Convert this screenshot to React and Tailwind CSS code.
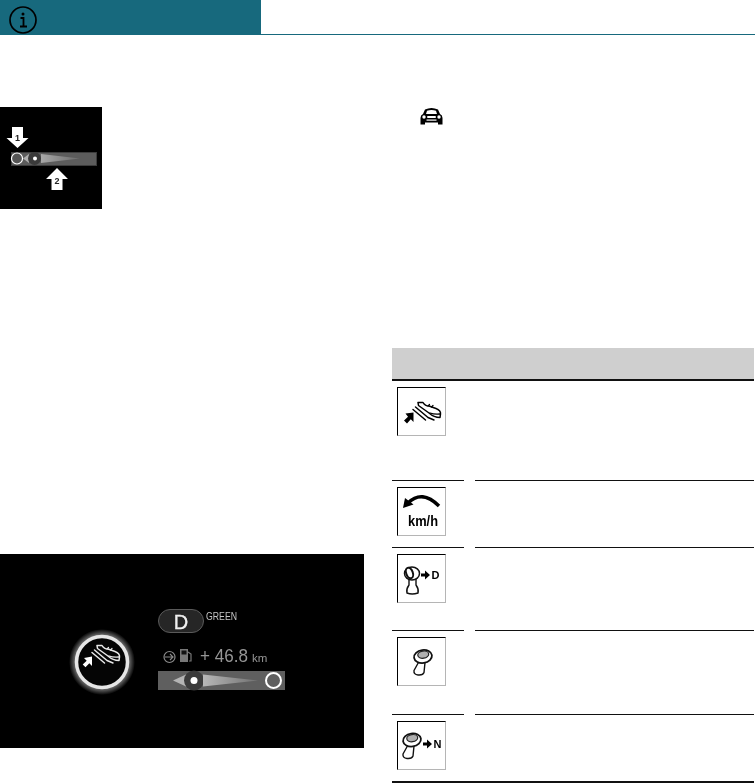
import React from "react"

// shoe on a pedal, drawn from the heel at 4,0 to the toe at 27,15
function Shoe({ color = "#000" }) {
  return (
    <g fill="none" stroke={color} strokeLinejoin="round" strokeLinecap="round">
      <path d="M5 0.500 L10 0.500 Q12 4 16 4 L23 6.500 Q28 8.500 27.500 12 L27 15.500 Q21 15.500 16 11 L5.500 3.500 Z" strokeWidth="1.500" />
      <path d="M17 11 Q21 12.500 27 12" strokeWidth="1.300" />
      <path d="M15 4 L16.500 2.500 M18.500 5 L20 3.500" strokeWidth="1.200" />
      <path d="M2.500 5 L15 15.500 L21 18" strokeWidth="1.500" />
      <path d="M0 7.500 L12.500 18" strokeWidth="1.500" />
    </g>
  )
}

function IconBox({ children }) {
  return (
    <div className="w-[49px] h-[49px] border-t border-l border-t-black border-l-black border-r border-b border-r-[#b5b5b5] border-b-[#b5b5b5] bg-white">
      <svg viewBox="0 0 47 47" width="47" height="47" className="block blur-[0.3px]">
        {children}
      </svg>
    </div>
  )
}

// selector lever, tilted, origin at the centre of its head
function Lever({ x, y }) {
  return (
    <g transform={`translate(${x} ${y})`} fill="none" stroke="#111" strokeLinejoin="round">
      <path d="M-4 5 L-9 14 Q-9.500 18 -5 18.500 Q0 19 1 16 L2 6" fill="#fff" strokeWidth="1.400" />
      <ellipse cx="0" cy="0" rx="9" ry="6.500" transform="rotate(-8)" fill="#fff" strokeWidth="1.800" />
      <ellipse cx="0.500" cy="-1.800" rx="5.500" ry="3.600" transform="rotate(-8)" fill="#b0b0b0" stroke="#222" strokeWidth="1.200" />
    </g>
  )
}

function ArrowTo({ x, y, letter }) {
  return (
    <g>
      <path d={`M${x} ${y - 1.500} H${x + 4} V${y - 4.500} L${x + 9} ${y} L${x + 4} ${y + 4.500} V${y + 1.500} H${x} Z`} fill="#000" />
      <text x={x + 10.500} y={y + 4} fontSize="11" fontWeight="700" fontFamily="'Liberation Sans', sans-serif" fill="#000">
        {letter}
      </text>
    </g>
  )
}

const rows = [
  {
    h: "h-[100px]",
    icon: (
      <>
        <g transform="translate(15 14)"><Shoe /></g>
        <path d="M15.500 24.500 L15.500 34 L12.800 31.300 L9 35.500 L6 32.500 L10 28.700 L7.500 25.500 Z" fill="#000" />
      </>
    ),
  },
  {
    h: "h-[67px]",
    icon: (
      <>
        <path d="M10 15 Q24 1 41 18" fill="none" stroke="#000" strokeWidth="3.400" />
        <path d="M5 20 L7 10 L15.500 16.500 Z" fill="#000" />
        <text x="10" y="38" fontSize="15" fontWeight="700" fontFamily="'Liberation Sans', sans-serif" fill="#000" textLength="30" lengthAdjust="spacingAndGlyphs">
          km/h
        </text>
      </>
    ),
  },
  {
    h: "h-[83px]",
    icon: (
      <>
        <path d="M11 24 L11 30 Q8 34 9 38 Q14 40 20 38 Q21 34 18 30 L18 24" fill="#fff" stroke="#111" strokeWidth="1.400" />
        <ellipse cx="14" cy="18.500" rx="7.500" ry="6.500" fill="#fff" stroke="#111" strokeWidth="1.500" />
        <ellipse cx="11.500" cy="18" rx="3.300" ry="5.500" transform="rotate(-20 11.500 18)" fill="#fff" stroke="#111" strokeWidth="2" />
        <ArrowTo x={23} y={20} letter="D" />
      </>
    ),
  },
  {
    h: "h-[84px]",
    icon: <Lever x={25} y={18.500} />,
  },
  {
    h: "h-[66px]",
    icon: (
      <>
        <Lever x={14} y={18} />
        <ArrowTo x={25} y={22} letter="N" />
      </>
    ),
  },
]

function SmallPanel() {
  return (
    <div className="w-[102px] h-[102px] bg-black">
      <svg viewBox="0 0 102 102" width="102" height="102" className="block blur-[0.3px]">
        <defs>
          <linearGradient id="beam1" x1="0" x2="1">
            <stop offset="0" stopColor="#a8a8a8" />
            <stop offset="1" stopColor="#6a6a6a" />
          </linearGradient>
        </defs>
        <rect x="11.500" y="45.500" width="85" height="13" fill="#5c5c5c" stroke="#3c3c3c" />
        <path d="M23 51.500 L29 47 V56 Z" fill="#b0b0b0" />
        <circle cx="34.500" cy="51.500" r="6.500" fill="#3a3a3a" />
        <path d="M41 47 L80 51.500 L41 56 Z" fill="url(#beam1)" />
        <circle cx="35" cy="51.500" r="2" fill="#fff" />
        <circle cx="17" cy="51.500" r="5.500" fill="#555" stroke="#fff" strokeWidth="1.200" />
        <path d="M12 20 H23 V31 H28.500 L17.500 41 L6.500 31 H12 Z" fill="#fff" />
        <text x="17.500" y="33.500" textAnchor="middle" fontSize="9" fontWeight="700" fontFamily="'Liberation Sans', sans-serif" fill="#222">1</text>
        <path d="M57 61 L68 72 H62.500 V83 H51.500 V72 H46 Z" fill="#fff" />
        <text x="57" y="76.500" textAnchor="middle" fontSize="9" fontWeight="700" fontFamily="'Liberation Sans', sans-serif" fill="#222">2</text>
      </svg>
    </div>
  )
}

function DrivePanel() {
  return (
    <div className="w-[364px] h-[194px] bg-black">
      <svg viewBox="0 0 364 194" width="364" height="194" className="block blur-[0.4px]">
        <defs>
          <linearGradient id="beam2" x1="0" x2="1">
            <stop offset="0" stopColor="#b8b8b8" />
            <stop offset="1" stopColor="#707070" />
          </linearGradient>
          <radialGradient id="glow">
            <stop offset="0.82" stopColor="#6a6a6a" />
            <stop offset="0.9" stopColor="#3a3a3a" />
            <stop offset="1" stopColor="#000" />
          </radialGradient>
        </defs>
        {/* eco gauge */}
        <circle cx="102" cy="108" r="33" fill="url(#glow)" />
        <circle cx="102" cy="108" r="25.500" fill="#050505" stroke="#e6e6e6" strokeWidth="3.500" />
        <g transform="translate(92 91)"><Shoe color="#e8e8e8" /></g>
        <path d="M92 102.500 L92 112 L89.300 109.300 L85.500 113.300 L82.700 110.500 L86.700 106.700 L84 104 Z" fill="#fff" />

        {/* gear pill */}
        <rect x="158.500" y="55.500" width="45" height="23" rx="11.500" fill="#262626" stroke="#5a5a5a" />
        <text x="181" y="74.500" textAnchor="middle" fontSize="20" fontFamily="'Liberation Sans', sans-serif" fill="#f0f0f0" stroke="#f0f0f0" strokeWidth="0.300">D</text>
        <text x="206" y="66" fontSize="10" fontFamily="'Liberation Sans', sans-serif" fill="#c4c4c4" textLength="31" lengthAdjust="spacingAndGlyphs">GREEN</text>

        {/* range */}
        <circle cx="169.500" cy="103" r="5.500" fill="none" stroke="#8a8a8a" strokeWidth="1.200" />
        <path d="M165 103 H173 M170 100 L173 103 L170 106" fill="none" stroke="#8a8a8a" strokeWidth="1.200" />
        <path d="M180 95 H188 V108 H180 Z" fill="#777" />
        <rect x="181.500" y="96.500" width="5" height="4" fill="#111" />
        <path d="M188 98 L191 100 V107 H189" fill="none" stroke="#777" strokeWidth="1.200" />
        <text x="200" y="108" fontSize="19" fontFamily="'Liberation Sans', sans-serif" fill="#969696" textLength="48" lengthAdjust="spacingAndGlyphs">+ 46.8</text>
        <text x="252" y="108" fontSize="11.500" fontFamily="'Liberation Sans', sans-serif" fill="#969696">km</text>

        {/* bar */}
        <rect x="158" y="117" width="127" height="19" fill="#5f5f5f" />
        <path d="M173 126.500 L186 120.500 V132.500 Z" fill="#b4b4b4" />
        <circle cx="194" cy="126.500" r="10" fill="#3b3b3b" />
        <path d="M203 120.500 L258 126.500 L203 132.500 Z" fill="url(#beam2)" />
        <circle cx="194" cy="126.500" r="3.500" fill="#fff" />
        <circle cx="273.500" cy="126.500" r="7.500" fill="#5f5f5f" stroke="#fff" strokeWidth="2" />
      </svg>
    </div>
  )
}

export default function App() {
  return (
    <div className="w-[755px] h-[783px] bg-white overflow-hidden font-['Liberation_Sans',sans-serif]">
      {/* Header */}
      <div className="h-[35px] border-b border-[#17697d]">
        <div className="w-[261px] h-[34px] bg-[#17697d] pl-[9px] pt-[6px]">
          <svg viewBox="0 0 28 28" width="28" height="28" className="block" fill="none" stroke="#000">
            <circle cx="14" cy="14" r="13" strokeWidth="1.700" />
            <circle cx="14" cy="8" r="1.500" fill="#000" stroke="none" />
            <path d="M11.500 12 H14.500 V20 M11 20.500 H18" strokeWidth="1.800" />
          </svg>
        </div>
      </div>

      <div className="flex">
        {/* Left column */}
        <div className="w-[364px] pt-[72px] flex flex-col gap-[345px]">
          <SmallPanel />
          <DrivePanel />
        </div>

        {/* Right column */}
        <div className="w-[362px] ml-[28px] flex-none">
          <div className="h-[313px] pt-[72px] pl-[28px]">
            <svg viewBox="0 0 23 18" width="23" height="18" className="block">
              <path d="M3 7 L5 2.500 Q11.500 -0.500 18 2.500 L20 7 Q22.500 8 22.500 11 V17.500 H18 V15.500 H5 V17.500 H0.500 V11 Q0.500 8 3 7 Z" fill="#000" />
              <path d="M6 7 L7 3.800 Q11.500 2.200 16 3.800 L17 7 Z" fill="#fff" />
              <circle cx="4" cy="10" r="1.700" fill="#fff" />
              <circle cx="19" cy="10" r="1.700" fill="#fff" />
              <rect x="7" y="9" width="9" height="2" rx="1" fill="#fff" />
              <rect x="6.500" y="12.500" width="10" height="1.200" fill="#fff" />
            </svg>
          </div>

          <div className="h-[31px] bg-[#cfcfcf]" />
          <div className="h-[2px] bg-[#111]" />

          {rows.map((row, i) => {
            const line = i < rows.length - 1 ? "border-b border-[#111]" : ""
            return (
              <div key={i} className={`grid grid-cols-[72px_279px] gap-x-[11px] ${row.h}`}>
                <div className={`pl-[5px] pt-[6px] ${line}`}>
                  <IconBox>{row.icon}</IconBox>
                </div>
                <div className={line} />
              </div>
            )
          })}

          <div className="h-[3px] bg-[#111]" />
        </div>
      </div>
    </div>
  )
}
